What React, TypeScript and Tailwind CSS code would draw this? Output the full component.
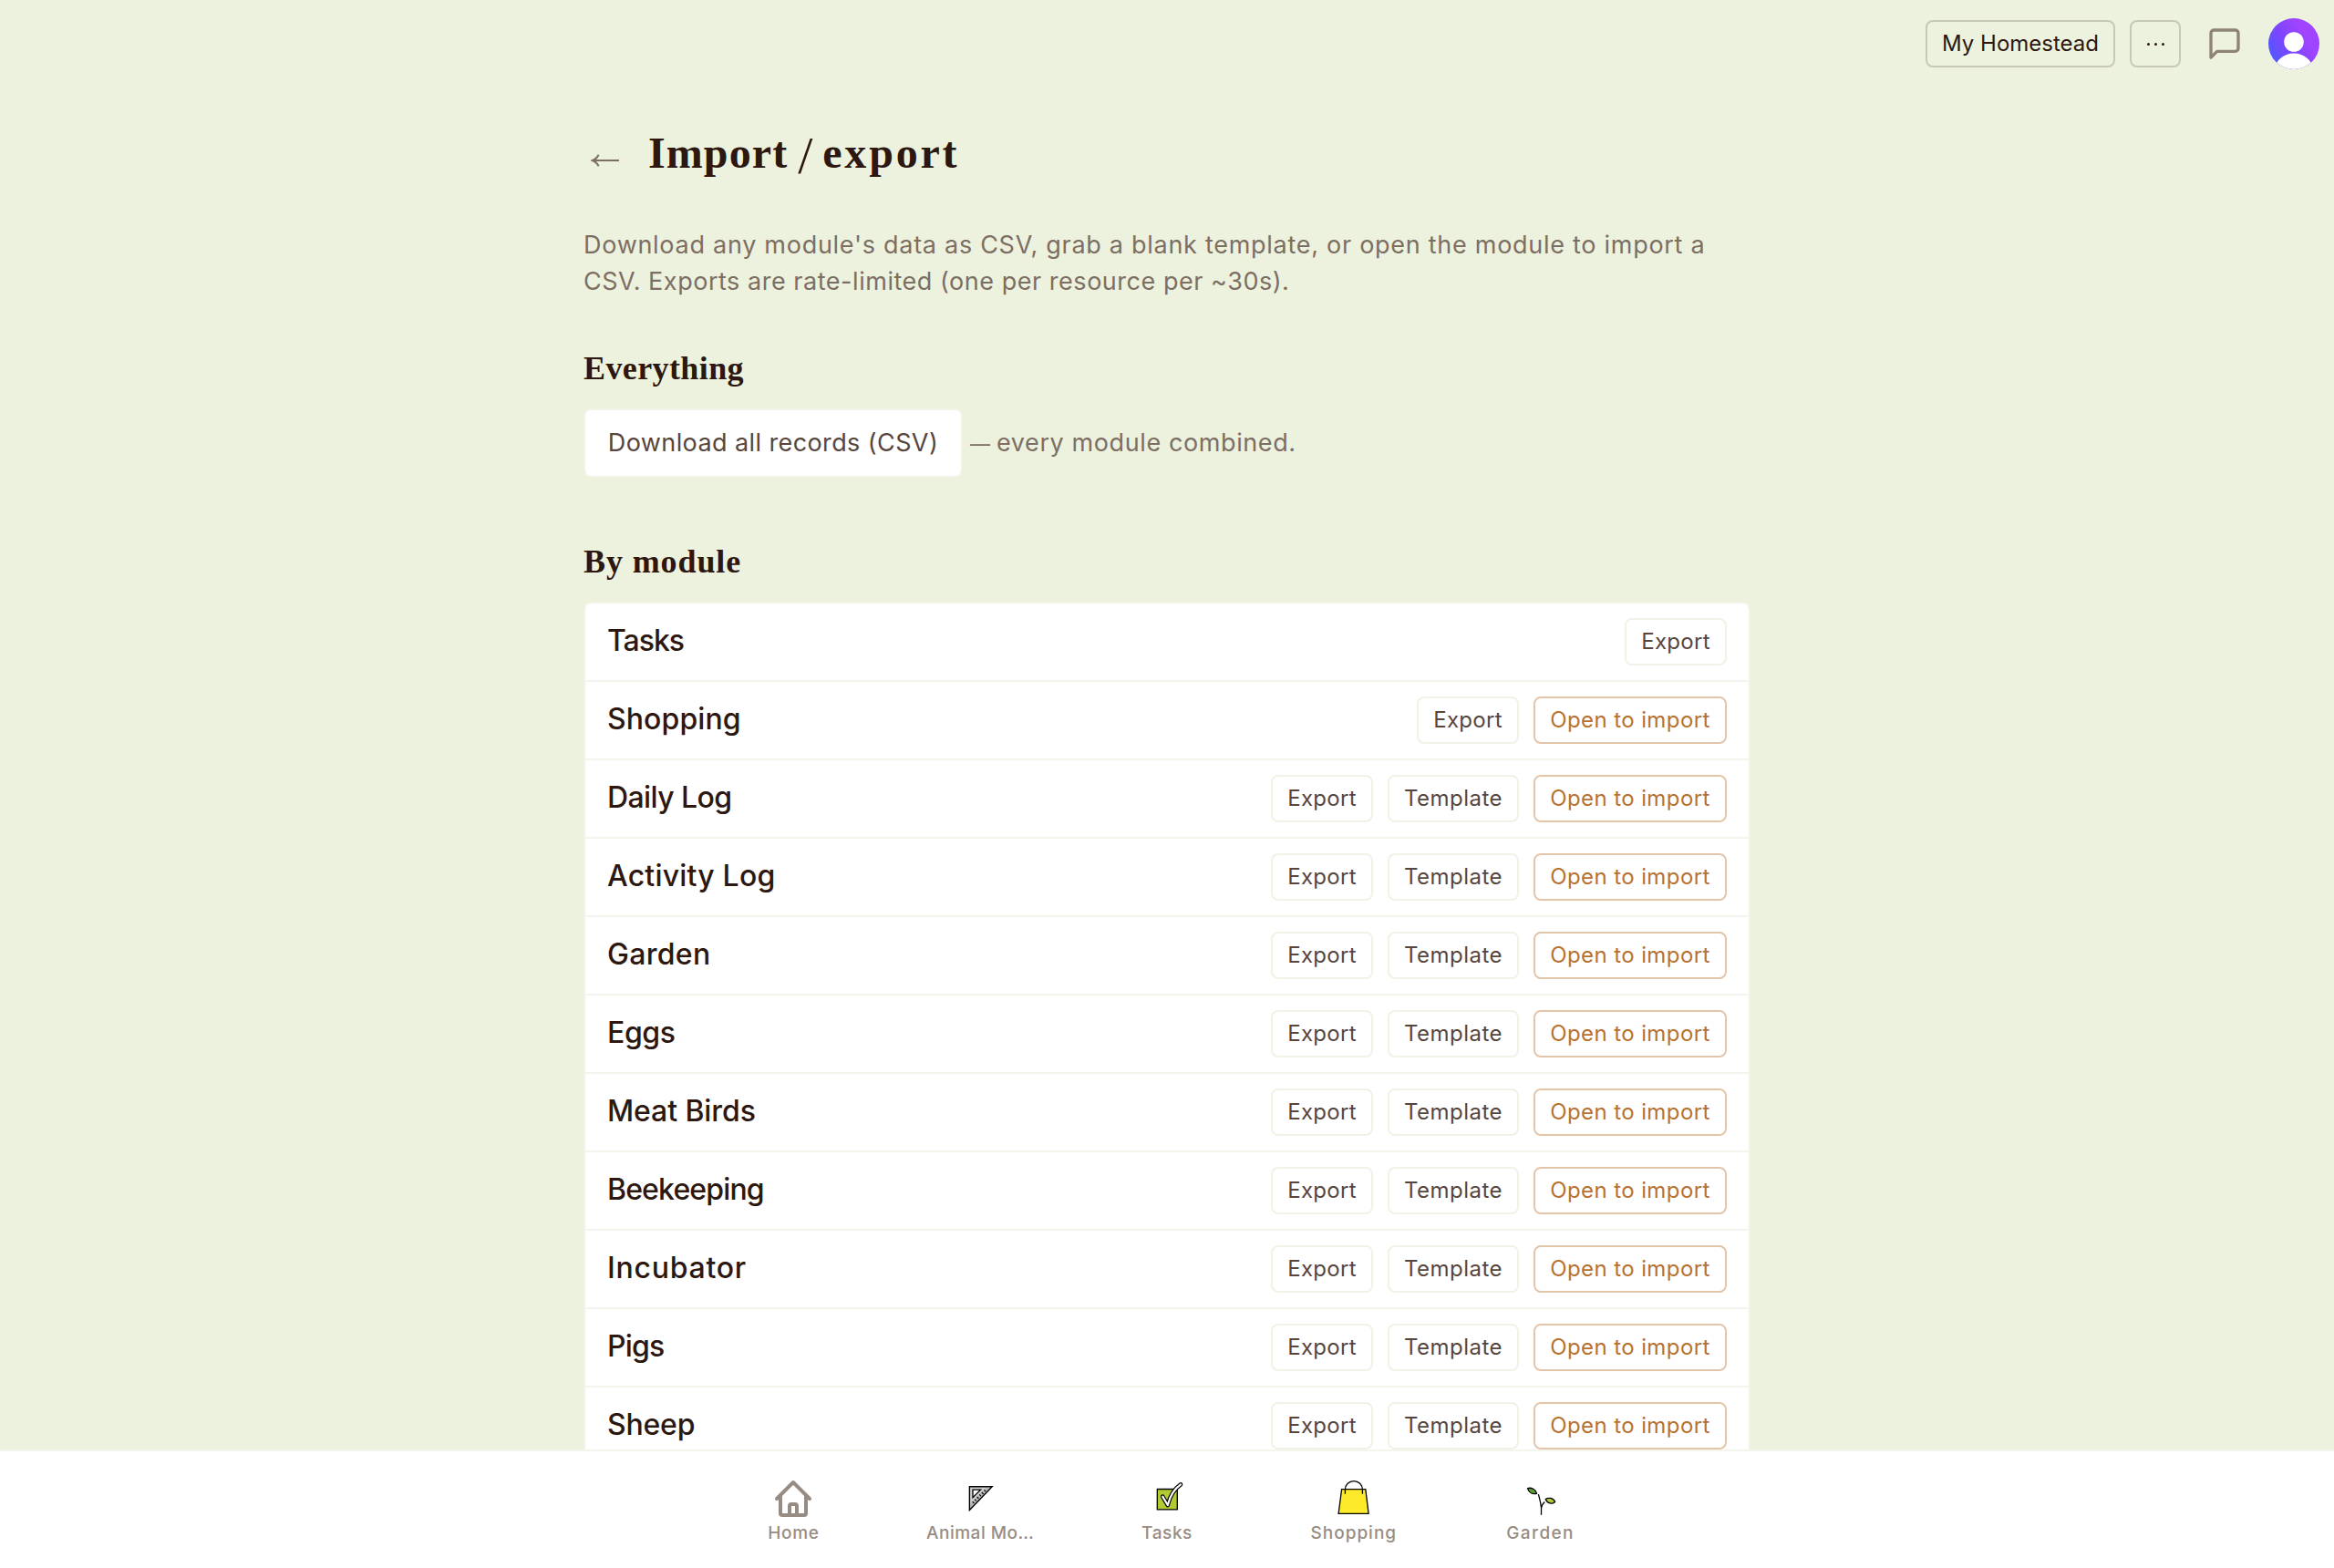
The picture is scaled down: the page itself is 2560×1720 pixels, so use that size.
import type { ReactNode } from "react";

type Module = {
  name: string;
  tracking: string;
  template?: boolean;
  canImport?: boolean;
};

const modules: Module[] = [
  { name: "Tasks", tracking: "tracking-[-1px]" },
  { name: "Shopping", tracking: "tracking-[0.1px]", canImport: true },
  { name: "Daily Log", tracking: "tracking-[-0.6px]", template: true, canImport: true },
  { name: "Activity Log", tracking: "tracking-[0.2px]", template: true, canImport: true },
  { name: "Garden", tracking: "tracking-[0.3px]", template: true, canImport: true },
  { name: "Eggs", tracking: "tracking-[-0.4px]", template: true, canImport: true },
  { name: "Meat Birds", tracking: "tracking-[-0.1px]", template: true, canImport: true },
  { name: "Beekeeping", tracking: "tracking-[-0.85px]", template: true, canImport: true },
  { name: "Incubator", tracking: "tracking-[0.75px]", template: true, canImport: true },
  { name: "Pigs", tracking: "tracking-[-0.8px]", template: true, canImport: true },
  { name: "Sheep", tracking: "tracking-[-0.2px]", template: true, canImport: true },
];

function ArrowLeft() {
  return (
    <svg width="32" height="16" viewBox="0 0 32 16" fill="none" stroke="#7d6e63" strokeWidth="2">
      <path d="M2 8h29" />
      <path d="M8.6 1.8C7 5 4.6 7 1.8 8C4.6 9 7 11 8.6 14.2" />
    </svg>
  );
}

function ChatIcon() {
  return (
    <svg
      className="size-10"
      viewBox="0 0 24 24"
      fill="none"
      stroke="#8f8375"
      strokeWidth="2"
      strokeLinecap="round"
      strokeLinejoin="round"
    >
      <path d="M21 15a2 2 0 0 1-2 2H7l-4 4V5a2 2 0 0 1 2-2h14a2 2 0 0 1 2 2z" />
    </svg>
  );
}

function Avatar() {
  return (
    <svg className="size-14" viewBox="0 0 56 56">
      <defs>
        <linearGradient id="avatar-fill" x1="0" y1="0.75" x2="0.7" y2="0.3">
          <stop offset="0" stopColor="#4a5cff" />
          <stop offset="0.5" stopColor="#7c45ff" />
          <stop offset="1" stopColor="#a044ff" />
        </linearGradient>
        <clipPath id="avatar-clip">
          <circle cx="28" cy="28" r="28" />
        </clipPath>
      </defs>
      <g clipPath="url(#avatar-clip)">
        <rect width="56" height="56" fill="url(#avatar-fill)" />
        <circle cx="28" cy="26" r="10.8" fill="#fff" />
        <ellipse cx="28" cy="57" rx="21" ry="18.5" fill="#fff" />
      </g>
    </svg>
  );
}

function HomeIcon() {
  return (
    <svg
      className="size-12"
      viewBox="0 0 24 24"
      fill="none"
      stroke="#978c84"
      strokeWidth="2"
      strokeLinecap="round"
      strokeLinejoin="round"
    >
      <path d="M3 12l2-2m0 0l7-7 7 7M5 10v10a1 1 0 001 1h3m10-11l2 2m-2-2v10a1 1 0 01-1 1h-3m-6 0a1 1 0 001-1v-4a1 1 0 011-1h2a1 1 0 011 1v4a1 1 0 001 1m-6 0h6" />
    </svg>
  );
}

function SetSquareIcon() {
  return (
    <svg className="size-12" viewBox="0 0 48 48">
      <path d="M12.4 10.8H37.2L12.4 36.6z" fill="#d0cfce" />
      <path d="M35 12L13 34.5V30L30.5 12z" fill="#9b9b9a" opacity="0.45" />
      <path d="M12.4 10.8H37.2L12.4 36.6z" fill="none" stroke="#000" strokeWidth="1.4" />
      <path d="M16 14.2H24.6L16 22.8z" fill="#fff" stroke="#000" strokeWidth="1.3" />
      <path
        d="M15.6 27.2l1.8 1.8M18 24.6l1.8 1.8M20.6 22l1.8 1.8M23.2 19.4l1.8 1.8M25.8 17l1.8 1.8M28.4 14.4l1.8 1.8"
        stroke="#000"
        strokeWidth="1.2"
      />
    </svg>
  );
}

function CheckIcon() {
  return (
    <svg className="size-12" viewBox="0 0 48 48" fill="none" strokeLinecap="round" strokeLinejoin="round">
      <rect x="13.3" y="13.5" width="22" height="22.4" fill="#b1cc33" stroke="#000" strokeWidth="1.3" />
      <path d="M19.2 21.6L24.8 31C27 22 31.5 13.6 39 8.4" stroke="#000" strokeWidth="4.6" />
      <path d="M19.2 21.6L24.8 31C27 22 31.5 13.6 39 8.4" stroke="#fff" strokeWidth="2.2" />
    </svg>
  );
}

function BagIcon() {
  return (
    <svg className="size-12" viewBox="0 0 48 48" fill="none" stroke="#000" strokeWidth="1.3">
      <path d="M10.6 13.7H36.8L40.1 40.4H7.1z" fill="#fcea2b" />
      <path d="M14.4 18.8V13.9a9.5 9.3 0 0 1 19 0V18.8" />
    </svg>
  );
}

function SproutIcon() {
  return (
    <svg className="size-12" viewBox="0 0 48 48" fill="none" stroke="#000" strokeWidth="1.3" strokeLinejoin="round">
      <path d="M9.6 12.6C13.6 11.4 18.6 13.6 19.6 18.4C15 19.4 10.8 17.4 9.6 12.6z" fill="#5c9e31" />
      <path d="M29.2 24.6C32 22.4 37.6 22.8 39.7 27.4C36.4 30.2 31.2 29.6 29.2 24.6z" fill="#b1cc33" />
      <path d="M21.4 19.2C22.4 23 24 28 24.5 34V41.8M24.5 34.5C24.7 32 26 29.4 28.2 27.4" />
    </svg>
  );
}

function SmallButton({ children, className }: { children: ReactNode; className: string }) {
  return (
    <button className={`h-[52px] whitespace-nowrap rounded-lg border-2 text-[24px] leading-none ${className}`}>
      {children}
    </button>
  );
}

function ModuleRow({ module }: { module: Module }) {
  return (
    <div className="flex h-[86px] shrink-0 items-center justify-between border-b-2 border-[#f4f5ed] px-6">
      <span className={`pb-[2px] text-[32px] leading-10 font-medium text-[#2c1810] ${module.tracking}`}>
        {module.name}
      </span>
      <div className="flex gap-4">
        <SmallButton className="w-28 border-[#f1f2e6] tracking-[0.3px] text-[#57463e]">Export</SmallButton>
        {module.template && (
          <SmallButton className="w-36 border-[#f1f2e6] tracking-[0.5px] text-[#57463e]">Template</SmallButton>
        )}
        {module.canImport && (
          <SmallButton className="w-[212px] border-[#e3c6aa] tracking-[0.4px] text-[#b8722f]">
            Open to import
          </SmallButton>
        )}
      </div>
    </div>
  );
}

function NavItem({ icon, label, tracking }: { icon: ReactNode; label: string; tracking: string }) {
  return (
    <a className="flex flex-1 flex-col items-center">
      {icon}
      <span className={`mt-0.5 text-[19px] leading-6 font-medium text-[#978c84] ${tracking}`}>{label}</span>
    </a>
  );
}

export default function App() {
  return (
    <div className="flex h-[1720px] w-[2560px] flex-col overflow-hidden bg-[#edf2de] font-['Inter',sans-serif]">
      <div className="h-[1590px] overflow-hidden">
        {/* Top bar */}
        <header className="flex h-24 items-center justify-end gap-4 pr-4">
          <button className="h-[52px] w-[208px] whitespace-nowrap rounded-lg border-2 border-[#c8c9b5] text-[24px] leading-none text-[#2c1810]">
            My Homestead
          </button>
          <button className="flex h-[52px] w-14 items-center justify-center gap-[5px] rounded-lg border-2 border-[#c8c9b5]">
            <span className="size-[3px] rounded-full bg-[#2c1810]" />
            <span className="size-[3px] rounded-full bg-[#2c1810]" />
            <span className="size-[3px] rounded-full bg-[#2c1810]" />
          </button>
          <button className="flex size-16 items-center justify-center">
            <ChatIcon />
          </button>
          <Avatar />
        </header>

        <main className="mx-auto w-[1280px] pt-11">
          <div className="flex h-14 items-center">
            <a className="ml-2 w-[63px] pt-4">
              <ArrowLeft />
            </a>
            <h1 className="flex h-14 font-['Liberation_Serif',serif] text-[48px] leading-14 font-bold text-[#2c1810]">
              <span className="tracking-[1.1px]">Import</span>{" "}
              <span className="mt-[3px] w-[38px] text-center text-[58px] font-normal">/</span>{" "}
              <span className="tracking-[2.8px]">export</span>
            </h1>
          </div>

          <p className="mt-[53px] text-[27px] leading-10 text-[#7d6e63]">
            <span className="tracking-[0.72px]">
              Download any module's data as CSV, grab a blank template, or open the module to import a
            </span>
            <br />
            <span className="tracking-[0.53px]">CSV. Exports are rate-limited (one per resource per ~30s).</span>
          </p>

          <h2 className="mt-[55px] font-['Liberation_Serif',serif] text-[36px] leading-10 font-bold tracking-[0.4px] text-[#2c1810]">
            Everything
          </h2>
          <div className="mt-6 flex items-center">
            <button className="h-[76px] w-[416px] whitespace-nowrap rounded-lg border-2 border-[#f1f3e6] bg-white pt-px text-[27px] tracking-[0.4px] text-[#57463e]">
              Download all records (CSV)
            </button>
            <p className="ml-2 flex items-baseline gap-[7px] pt-px text-[27px] text-[#7d6e63]">
              <span className="text-[22px]">—</span>{" "}
              <span className="tracking-[0.6px]">every module combined.</span>
            </p>
          </div>

          <h2 className="mt-[72px] font-['Liberation_Serif',serif] text-[36px] leading-10 font-bold tracking-[0.9px] text-[#2c1810]">
            By module
          </h2>
          <div className="mt-6 rounded-lg border-2 border-[#f1f3e6] bg-white">
            {modules.map((module) => (
              <ModuleRow key={module.name} module={module} />
            ))}
          </div>
        </main>
      </div>

      {/* Bottom navigation */}
      <nav className="h-[130px] border-t-2 border-[#f4f5ed] bg-white">
        <div className="mx-auto flex w-[1024px] pt-7">
          <NavItem icon={<HomeIcon />} label="Home" tracking="tracking-[0.7px]" />
          <NavItem icon={<SetSquareIcon />} label="Animal Mo…" tracking="tracking-[0.5px]" />
          <NavItem icon={<CheckIcon />} label="Tasks" tracking="tracking-[0.6px]" />
          <NavItem icon={<BagIcon />} label="Shopping" tracking="tracking-[1px]" />
          <NavItem icon={<SproutIcon />} label="Garden" tracking="tracking-[1.4px]" />
        </div>
      </nav>
    </div>
  );
}
